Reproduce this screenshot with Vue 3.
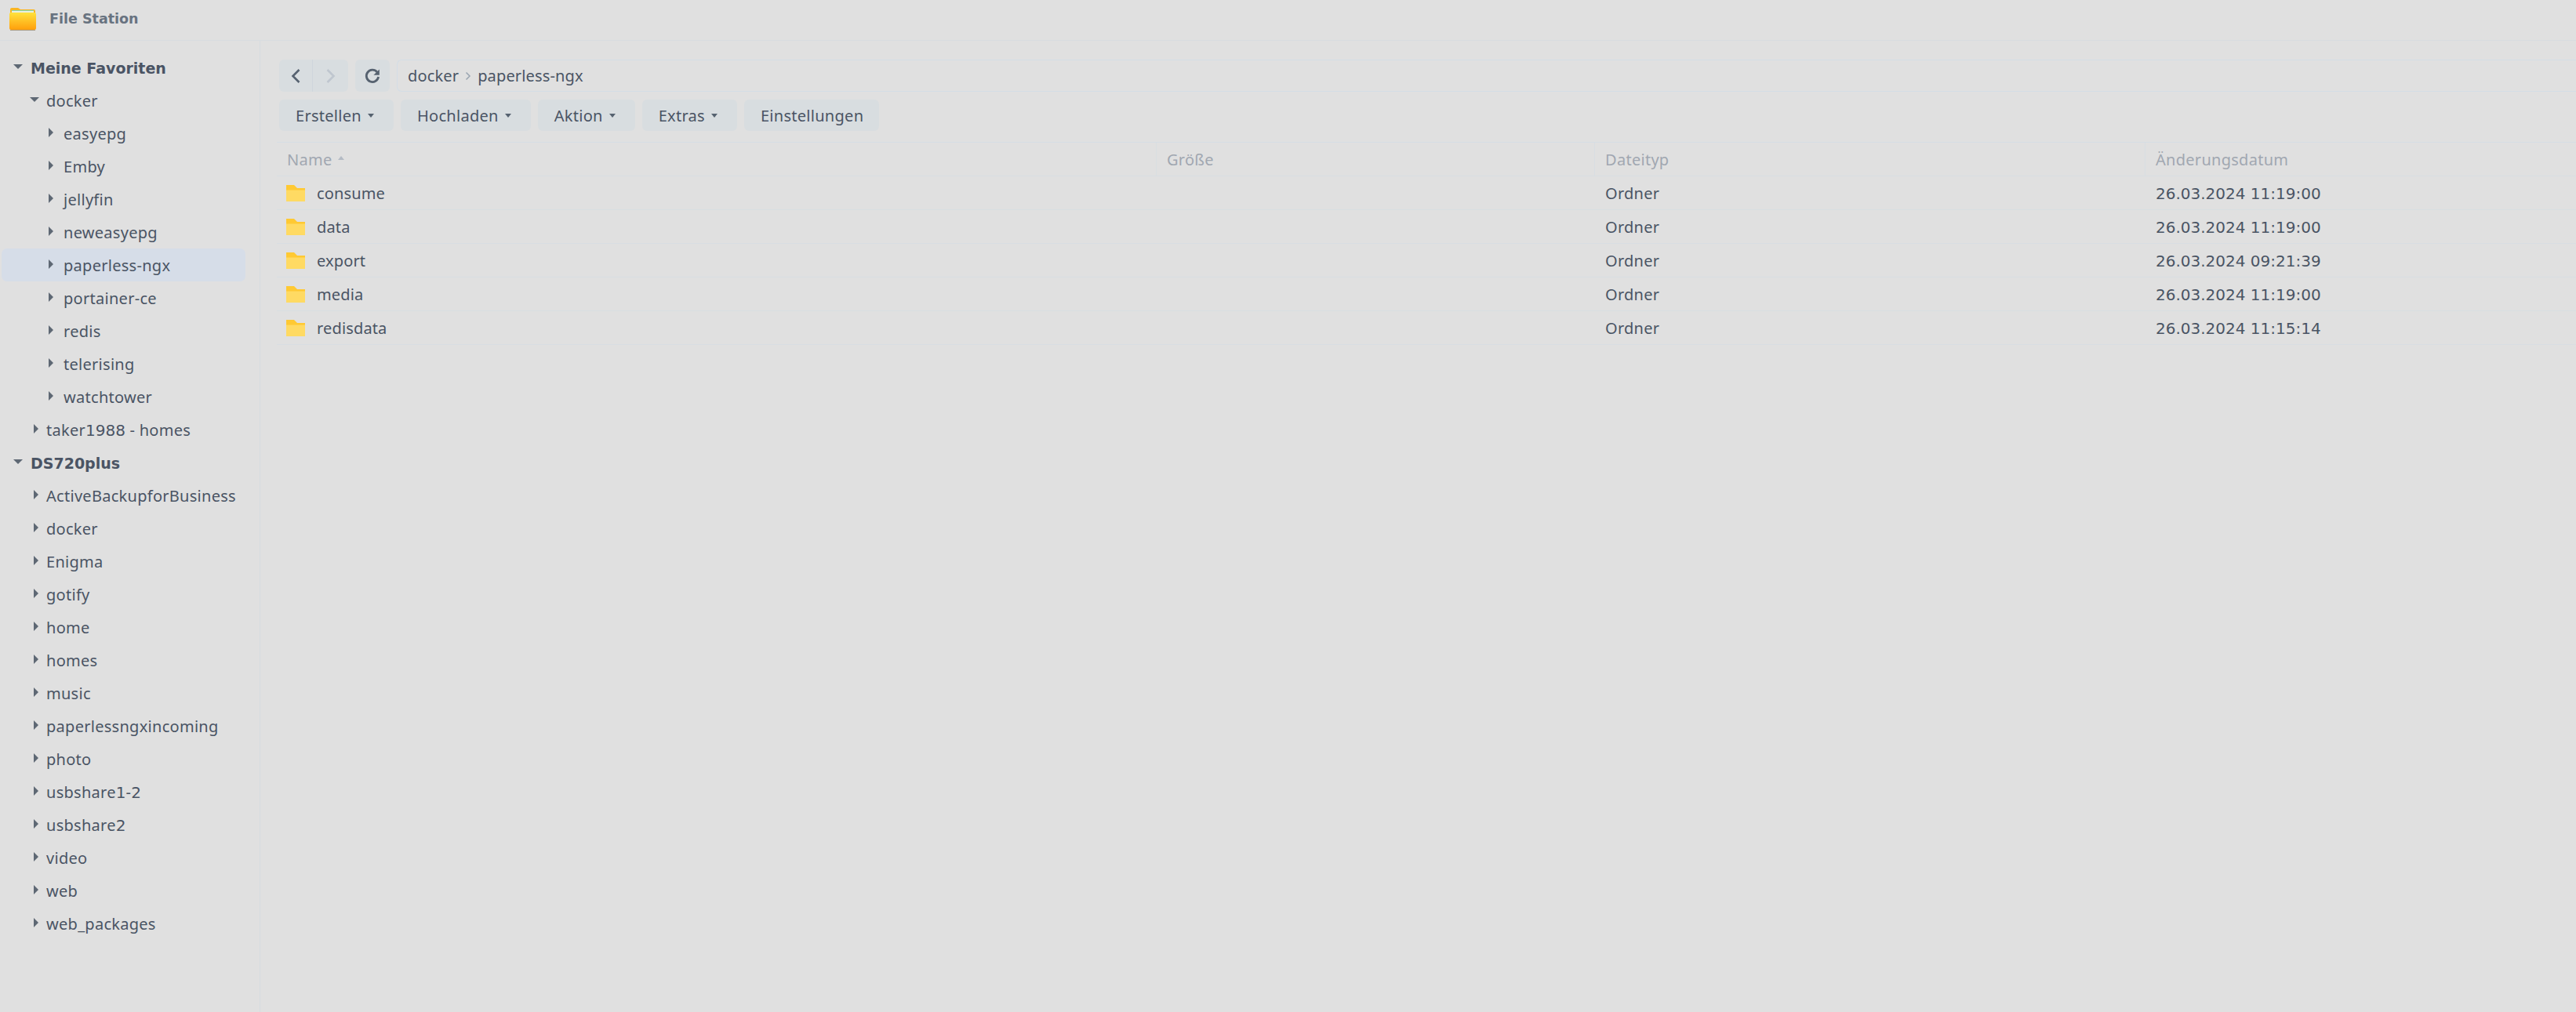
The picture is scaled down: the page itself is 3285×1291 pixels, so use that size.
<script setup>
const favs = ['easyepg', 'Emby', 'jellyfin', 'neweasyepg', 'paperless-ngx', 'portainer-ce', 'redis', 'telerising', 'watchtower']
const shares = ['ActiveBackupforBusiness', 'docker', 'Enigma', 'gotify', 'home', 'homes', 'music', 'paperlessngxincoming', 'photo', 'usbshare1-2', 'usbshare2', 'video', 'web', 'web_packages']
const tools = ['Erstellen', 'Hochladen', 'Aktion', 'Extras']
const files = [
  ['consume', '26.03.2024 11:19:00'],
  ['data', '26.03.2024 11:19:00'],
  ['export', '26.03.2024 09:21:39'],
  ['media', '26.03.2024 11:19:00'],
  ['redisdata', '26.03.2024 11:15:14']
]
// digits in the reference come from a wider face than the letters
const parts = (label) => label.split(/(\d+)/).filter(Boolean)
const isNum = (part) => /^\d/.test(part)
</script>

<template>
  <div class="app">
    <header class="titlebar">
      <svg class="logo" viewBox="0 0 34 29" width="34" height="29">
        <defs>
          <linearGradient id="lg" x1="0" y1="0" x2="0" y2="1">
            <stop offset="0" stop-color="#ffe23c" />
            <stop offset="1" stop-color="#ff9f0c" />
          </linearGradient>
        </defs>
        <path d="M1 2q0-2 2-2h8l3 2h17q2 0 2 2v8H1z" fill="#f9b523" />
        <rect x="3" y="3" width="28" height="8" fill="#7fd6b0" />
        <rect x="3" y="4" width="28" height="2" fill="#e8efe0" />
        <path d="M0 8q0-2 2-2h30q2 0 2 2v18q0 2-2 2H2q-2 0-2-2z" fill="url(#lg)" />
        <rect x="1" y="28" width="32" height="1" fill="#a89a80" />
      </svg>
      <span class="app-name">File Station</span>
    </header>

    <div class="body">
      <aside class="sidebar">
        <div class="row lvl0">
          <span class="arrow down"></span><b>Meine Favoriten</b>
        </div>
        <div class="row lvl1">
          <span class="arrow down"></span><span>docker</span>
        </div>
        <div
          v-for="f in favs"
          :key="f"
          class="row lvl2"
          :class="{ selected: f === 'paperless-ngx' }"
        >
          <span class="arrow right"></span><span>{{ f }}</span>
        </div>
        <div class="row lvl1">
          <span class="arrow right"></span>
          <span><span v-for="p in parts('taker1988 - homes')" :key="p" :class="{ num: isNum(p) }">{{ p }}</span></span>
        </div>
        <div class="row lvl0">
          <span class="arrow down"></span><b>DS720plus</b>
        </div>
        <div v-for="s in shares" :key="s" class="row lvl1">
          <span class="arrow right"></span>
          <span><span v-for="p in parts(s)" :key="p" :class="{ num: isNum(p) }">{{ p }}</span></span>
        </div>
      </aside>

      <main class="main">
        <div class="nav">
          <div class="btn-group">
            <button class="nav-btn back">
              <svg viewBox="0 0 14 20" width="14" height="20"><path d="M11.500 2 3.500 10l8 8" fill="none" stroke="#566270" stroke-width="2.600" /></svg>
            </button>
            <button class="nav-btn fwd">
              <svg viewBox="0 0 14 20" width="14" height="20"><path d="M2.500 2l8 8-8 8" fill="none" stroke="#bfc6cf" stroke-width="2.600" /></svg>
            </button>
          </div>
          <button class="refresh">
            <svg viewBox="0 0 20 20" width="20" height="20">
              <path d="M15.800 4.800A7.700 7.700 0 1 0 17.600 11" fill="none" stroke="#566270" stroke-width="2.800" />
              <path d="M18.800 1.400v7.400h-7.400z" fill="#566270" />
            </svg>
          </button>
          <div class="path">
            <span>docker</span>
            <svg viewBox="0 0 8 12" width="8" height="12"><path d="M1.500 1.500 6 6l-4.500 4.500" fill="none" stroke="#9aa5b1" stroke-width="1.500" /></svg>
            <span>paperless-ngx</span>
          </div>
        </div>

        <div class="toolbar">
          <button v-for="t in tools" :key="t" class="tool">
            {{ t }}<i class="caret"></i>
          </button>
          <button class="tool plain">Einstellungen</button>
        </div>

        <div class="table">
          <div class="thead tr">
            <div class="th">Name<i class="sort"></i></div>
            <div class="th">Größe</div>
            <div class="th">Dateityp</div>
            <div class="th">Änderungsdatum</div>
          </div>
          <div v-for="f in files" :key="f[0]" class="tr">
            <div class="td name">
              <svg viewBox="0 0 24 21" width="24" height="21" class="folder">
                <path d="M0 0h10l4 4h10v17H0z" fill="#ffc933" />
                <rect x="0" y="6.500" width="24" height="14.500" fill="#ffda63" />
              </svg>
              {{ f[0] }}
            </div>
            <div class="td"></div>
            <div class="td">Ordner</div>
            <div class="td date">{{ f[1] }}</div>
          </div>
        </div>
      </main>
    </div>
  </div>
</template>

<style>
html, body { margin: 0; background: #e0e0e0; overflow: hidden; }
</style>

<style scoped>
.app {
  width: 3285px;
  height: 1291px;
  background: #e0e0e0;
  color: #4a5464;
  font-family: "Noto Sans", sans-serif;
  font-size: 20px;
  letter-spacing: 0.28px;
  display: flex;
  flex-direction: column;
  overflow: hidden;
}
.titlebar {
  height: 51px;
  flex: none;
  box-sizing: content-box;
  border-bottom: 1px solid #d8dce0;
  display: flex;
  align-items: center;
  padding-left: 12px;
}
.logo { margin-top: -3px; }
.app-name {
  margin-left: 17px;
  font-family: "DejaVu Sans", sans-serif;
  font-weight: 700;
  font-size: 17.500px;
  letter-spacing: 0;
  color: #687380;
  margin-top: -3px;
}
.body { flex: 1; display: flex; min-height: 0; }
.sidebar {
  width: 332px;
  box-sizing: border-box;
  flex: none;
  border-right: 1px solid #d6dbe0;
  padding: 13px 18px 0 2px;
}
.row {
  height: 42px;
  display: flex;
  align-items: center;
  box-sizing: border-box;
  white-space: nowrap;
  border-radius: 7px;
}
.row b {
  font-family: "DejaVu Sans", sans-serif;
  font-weight: 700;
  font-size: 19px;
  letter-spacing: 0;
  color: #4a5464;
  padding-top: 2px;
}
.num {
  font-family: "DejaVu Sans", sans-serif;
  letter-spacing: 0;
}
.lvl0 { padding-left: 15px; }
.lvl1 { padding-left: 36px; }
.lvl2 { padding-left: 60px; }
.selected { background: #d6dde8; }
.arrow { flex: none; display: block; width: 0; height: 0; margin-top: -3px; }
.arrow.down {
  border-left: 6px solid transparent;
  border-right: 6px solid transparent;
  border-top: 6px solid #5e6874;
  margin-right: 10px;
}
.arrow.right {
  border-top: 6px solid transparent;
  border-bottom: 6px solid transparent;
  border-left: 6px solid #5e6874;
  margin-right: 13px;
}
.lvl1 .arrow.down { margin-right: 9px; }
.lvl1 .arrow.right { margin-left: 5px; margin-right: 10px; }
.main { flex: 1; min-width: 0; padding: 24px 0 0 21px; }
.nav { display: flex; height: 41px; padding-left: 3px; }
.btn-group { display: flex; width: 88px; }
button {
  border: 0;
  padding: 0;
  font: inherit;
  letter-spacing: inherit;
  color: inherit;
  background: #d8dde0;
}
.nav-btn {
  display: flex;
  align-items: center;
  justify-content: center;
  height: 41px;
}
.back { width: 43px; border-radius: 6px 0 0 6px; border-right: 1px solid #cfd6dc; }
.fwd { width: 45px; border-radius: 0 6px 6px 0; }
.refresh {
  width: 44px;
  margin-left: 9px;
  border-radius: 6px;
  display: flex;
  align-items: center;
  justify-content: center;
}
.path {
  flex: 1;
  margin-left: 9px;
  box-sizing: border-box;
  border: 1px solid #d4dde6;
  border-right: 0;
  border-radius: 6px 0 0 6px;
  display: flex;
  align-items: center;
  padding-left: 13px;
  gap: 8px;
  letter-spacing: 0.15px;
}
.toolbar { display: flex; gap: 9px; margin-top: 10px; padding-left: 3px; }
.tool {
  height: 40px;
  padding: 0 25px 0 21px;
  border-radius: 6px;
  display: flex;
  align-items: center;
  white-space: nowrap;
}
.tool.plain { padding: 0 20px 0 21px; }
.caret {
  display: block;
  margin-left: 8px;
  margin-top: 1px;
  border-left: 4.500px solid transparent;
  border-right: 4.500px solid transparent;
  border-top: 5px solid #566270;
}
.table { margin-top: 14px; border-top: 1px solid #d6dde4; }
.tr {
  display: grid;
  grid-template-columns: 1122px 559px 702px 1fr;
  height: 43px;
  box-sizing: border-box;
  border-bottom: 1px solid #d8dee2;
  align-items: stretch;
}
.th {
  color: #a0a7b1;
  display: flex;
  align-items: center;
  padding-left: 13px;
  border-right: 1px solid #d8dee2;
}
.th:last-child { border-right: 0; }
.sort {
  display: block;
  margin-left: 7px;
  margin-top: -4px;
  border-left: 4.500px solid transparent;
  border-right: 4.500px solid transparent;
  border-bottom: 5px solid #b4bbc4;
}
.td {
  display: flex;
  align-items: center;
  padding-left: 13px;
}
.td.name { padding-left: 12px; color: #4a5464; letter-spacing: 0.15px; }
.td.date {
  font-family: "DejaVu Sans", sans-serif;
  letter-spacing: 0;
  padding-top: 1px;
}
.folder { margin-right: 15px; flex: none; }
</style>
